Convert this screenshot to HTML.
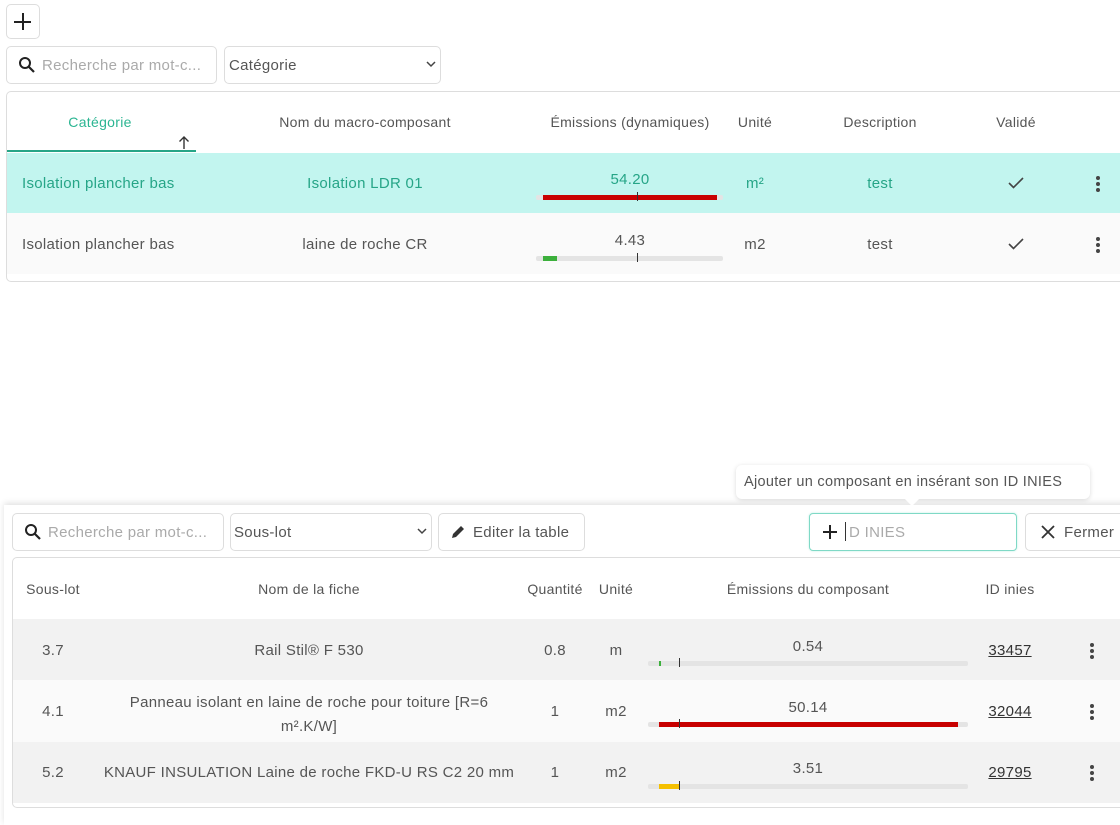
<!DOCTYPE html>
<html><head><meta charset="utf-8"><style>
*{box-sizing:border-box;margin:0;padding:0}
body{width:1120px;height:819px;background:#fff;font-family:"Liberation Sans","DejaVu Sans",sans-serif;font-size:15px;color:#555;position:relative;overflow:hidden;letter-spacing:.3px}
.a{position:absolute}
.box{position:absolute;border:1px solid #ddd;border-radius:5px;background:#fff}
.c{position:absolute;text-align:center;transform:translateX(-50%);white-space:nowrap}
.ph{color:#aaa}
.bar{position:absolute;height:5px;background:#e4e4e4;border-radius:2px}
.fill{position:absolute;height:5px}
.tick{position:absolute;width:1px;height:9px;background:#333}
.dots{position:absolute;width:4px}
.dots i{display:block;width:4px;height:4px;border-radius:50%;background:#444;margin-bottom:2px}
.u{text-decoration:underline;color:#333}
</style></head><body>
<div class="box" style="left:6px;top:4px;width:34px;height:35px"></div>
<div class="a" style="left:14px;top:21px;width:17px;height:2px;background:#222"></div>
<div class="a" style="left:21.5px;top:13px;width:2px;height:17px;background:#222"></div>
<div class="box" style="left:6px;top:46px;width:211px;height:38px"></div>
<svg class="a" style="left:18px;top:56px" width="18" height="18" viewBox="0 0 18 18"><circle cx="7" cy="7" r="5" fill="none" stroke="#222" stroke-width="2"/><path d="M11 11l5 5" stroke="#222" stroke-width="2.2"/></svg>
<div class="a ph" style="left:42px;top:57px">Recherche par mot-c...</div>
<div class="box" style="left:224px;top:46px;width:217px;height:38px"></div>
<div class="a" style="left:229px;top:57px;color:#555">Catégorie</div>
<svg class="a" style="left:426px;top:60px" width="10" height="8"><path d="M1 2l4 4 4-4" fill="none" stroke="#444" stroke-width="1.5"/></svg>

<div class="a" style="left:6px;top:91px;width:1120px;height:191px;border:1px solid #ddd;border-radius:5px;background:#fff"></div>
<div class="c" style="left:100px;top:114px;font-size:14px;color:#2bb592">Catégorie</div>
<svg class="a" style="left:178px;top:135px" width="12" height="14"><path d="M6 14V2M1.5 6.5L6 2l4.5 4.5" fill="none" stroke="#333" stroke-width="1.4"/></svg>
<div class="a" style="left:7px;top:150px;width:189px;height:2px;background:#26a587"></div>
<div class="c" style="left:365px;top:114px;font-size:14px">Nom du macro-composant</div>
<div class="c" style="left:630px;top:114px;font-size:14px">Émissions (dynamiques)</div>
<div class="c" style="left:755px;top:114px;font-size:14px">Unité</div>
<div class="c" style="left:880px;top:114px;font-size:14px">Description</div>
<div class="c" style="left:1016px;top:114px;font-size:14px">Validé</div>

<div class="a" style="left:7px;top:153px;width:1113px;height:60px;background:#c2f5ef"></div>
<div class="a" style="left:7px;top:213px;width:1113px;height:61px;background:#fafafa"></div>
<div class="a" style="left:22px;top:175px;color:#26a587">Isolation plancher bas</div>
<div class="c" style="left:365px;top:175px;color:#26a587">Isolation LDR 01</div>
<div class="c" style="left:630px;top:171px;color:#26a587">54.20</div>
<div class="bar" style="left:536px;top:195px;width:187px"></div>
<div class="fill" style="left:543px;top:195px;width:174px;background:#c80000"></div>
<div class="tick" style="left:637px;top:192px"></div>
<div class="c" style="left:755px;top:175px;color:#26a587">m²</div>
<div class="c" style="left:880px;top:175px;color:#26a587">test</div>
<svg class="a" style="left:1008px;top:177px" width="16" height="12"><path d="M1 6l4.5 4.5L15 1" fill="none" stroke="#444" stroke-width="1.6"/></svg>
<div class="dots" style="left:1096px;top:176px"><i></i><i></i><i></i></div>

<div class="a" style="left:22px;top:236px">Isolation plancher bas</div>
<div class="c" style="left:365px;top:236px">laine de roche CR</div>
<div class="c" style="left:630px;top:232px">4.43</div>
<div class="bar" style="left:536px;top:256px;width:187px"></div>
<div class="fill" style="left:543px;top:256px;width:14px;background:#3cb03c"></div>
<div class="tick" style="left:637px;top:253px"></div>
<div class="c" style="left:755px;top:236px">m2</div>
<div class="c" style="left:880px;top:236px">test</div>
<svg class="a" style="left:1008px;top:238px" width="16" height="12"><path d="M1 6l4.5 4.5L15 1" fill="none" stroke="#444" stroke-width="1.6"/></svg>
<div class="dots" style="left:1096px;top:237px"><i></i><i></i><i></i></div>

<div class="a" style="left:4px;top:505px;width:1130px;height:320px;background:#fff;box-shadow:0 -2px 6px rgba(0,0,0,.12)"></div>
<div class="a" style="left:736px;top:465px;width:354px;height:34px;background:#fff;border-radius:6px;box-shadow:0 1px 5px rgba(0,0,0,.15)"></div>
<div class="a" style="left:907px;top:494px;width:10px;height:10px;background:#fff;transform:rotate(45deg)"></div>
<div class="a" style="left:744px;top:474px;font-size:14.5px">Ajouter un composant en insérant son ID INIES</div>

<div class="box" style="left:12px;top:513px;width:212px;height:38px"></div>
<svg class="a" style="left:24px;top:523px" width="18" height="18" viewBox="0 0 18 18"><circle cx="7" cy="7" r="5" fill="none" stroke="#222" stroke-width="2"/><path d="M11 11l5 5" stroke="#222" stroke-width="2.2"/></svg>
<div class="a ph" style="left:48px;top:524px">Recherche par mot-c...</div>
<div class="box" style="left:230px;top:513px;width:202px;height:38px"></div>
<div class="a" style="left:234px;top:524px">Sous-lot</div>
<svg class="a" style="left:417px;top:527px" width="10" height="8"><path d="M1 2l4 4 4-4" fill="none" stroke="#444" stroke-width="1.5"/></svg>
<div class="box" style="left:438px;top:513px;width:147px;height:38px"></div>
<svg class="a" style="left:451px;top:524px" width="15" height="15" viewBox="0 0 15 15"><path d="M1 14l1-4 8-8 3 3-8 8z" fill="#333"/></svg>
<div class="a" style="left:473px;top:524px">Editer la table</div>
<div class="a" style="left:809px;top:513px;width:208px;height:38px;border:1px solid #7fd9c6;border-radius:4px;background:#fff;box-shadow:0 0 2px #bfeee3"></div>
<div class="a" style="left:823px;top:531px;width:14px;height:2px;background:#222"></div>
<div class="a" style="left:829px;top:525px;width:2px;height:14px;background:#222"></div>
<div class="a" style="left:845px;top:522px;width:1px;height:19px;background:#333"></div>
<div class="a ph" style="left:849px;top:524px">D INIES</div>
<div class="box" style="left:1025px;top:513px;width:110px;height:38px"></div>
<svg class="a" style="left:1041px;top:525px" width="14" height="14"><path d="M1 1l12 12M13 1L1 13" stroke="#333" stroke-width="1.8"/></svg>
<div class="a" style="left:1064px;top:524px">Fermer</div>

<div class="a" style="left:12px;top:557px;width:1120px;height:251px;border:1px solid #ddd;border-radius:5px;background:#fff"></div>
<div class="c" style="left:53px;top:581px;font-size:14px">Sous-lot</div>
<div class="c" style="left:309px;top:581px;font-size:14px">Nom de la fiche</div>
<div class="c" style="left:555px;top:581px;font-size:14px">Quantité</div>
<div class="c" style="left:616px;top:581px;font-size:14px">Unité</div>
<div class="c" style="left:808px;top:581px;font-size:14px">Émissions du composant</div>
<div class="c" style="left:1010px;top:581px;font-size:14px">ID inies</div>

<div class="a" style="left:13px;top:619px;width:1110px;height:61px;background:#f2f2f2"></div>
<div class="a" style="left:13px;top:680px;width:1110px;height:62px;background:#fafafa"></div>
<div class="a" style="left:13px;top:742px;width:1110px;height:61px;background:#f2f2f2"></div>

<div class="c" style="left:53px;top:642px">3.7</div>
<div class="c" style="left:309px;top:642px">Rail Stil® F 530</div>
<div class="c" style="left:555px;top:642px">0.8</div>
<div class="c" style="left:616px;top:642px">m</div>
<div class="c" style="left:808px;top:638px">0.54</div>
<div class="bar" style="left:648px;top:661px;width:320px"></div>
<div class="fill" style="left:659px;top:661px;width:2px;background:#3cb03c"></div>
<div class="tick" style="left:679px;top:658px"></div>
<div class="c u" style="left:1010px;top:642px">33457</div>
<div class="dots" style="left:1090px;top:643px"><i></i><i></i><i></i></div>

<div class="c" style="left:53px;top:703px">4.1</div>
<div class="c" style="left:309px;top:691px;line-height:24px">Panneau isolant en laine de roche pour toiture [R=6<br>m².K/W]</div>
<div class="c" style="left:555px;top:703px">1</div>
<div class="c" style="left:616px;top:703px">m2</div>
<div class="c" style="left:808px;top:699px">50.14</div>
<div class="bar" style="left:648px;top:722px;width:320px"></div>
<div class="fill" style="left:659px;top:722px;width:299px;background:#c80000"></div>
<div class="tick" style="left:679px;top:719px"></div>
<div class="c u" style="left:1010px;top:703px">32044</div>
<div class="dots" style="left:1090px;top:704px"><i></i><i></i><i></i></div>

<div class="c" style="left:53px;top:764px">5.2</div>
<div class="c" style="left:309px;top:764px">KNAUF INSULATION Laine de roche FKD-U RS C2 20 mm</div>
<div class="c" style="left:555px;top:764px">1</div>
<div class="c" style="left:616px;top:764px">m2</div>
<div class="c" style="left:808px;top:760px">3.51</div>
<div class="bar" style="left:648px;top:784px;width:320px"></div>
<div class="fill" style="left:659px;top:784px;width:20px;background:#f5c000"></div>
<div class="tick" style="left:679px;top:781px"></div>
<div class="c u" style="left:1010px;top:764px">29795</div>
<div class="dots" style="left:1090px;top:765px"><i></i><i></i><i></i></div>
</body></html>
